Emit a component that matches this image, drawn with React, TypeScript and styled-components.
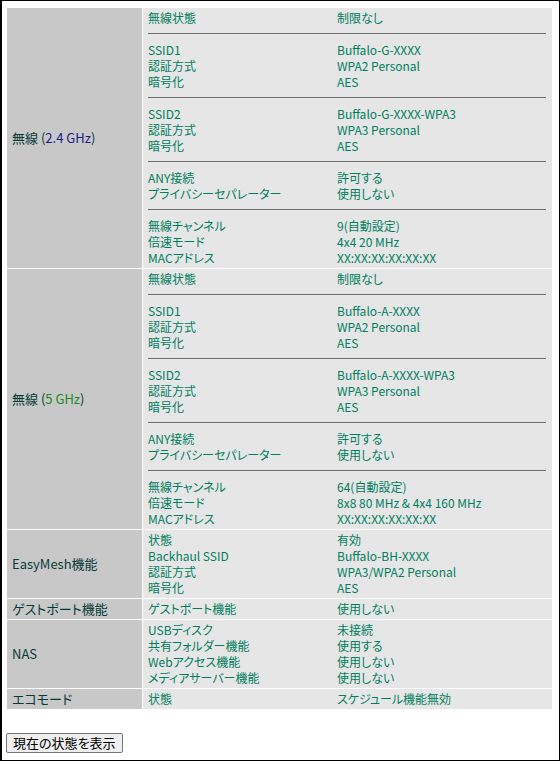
import React from "react";
import styled, { createGlobalStyle } from "styled-components";

const Global = createGlobalStyle`
  html, body { margin: 0; padding: 0; background: #fff; }
  body {
    font-family: "Noto Sans CJK JP", "Noto Sans", sans-serif;
    font-size: 12px;
  }
`;

const Frame = styled.div`
  width: 560px;
  height: 761px;
  box-sizing: border-box;
  border: 1px solid #000;
  border-left-width: 2px;
  padding: 7px 7px 0 5px;
  font-feature-settings: "palt";
`;

const StatusTable = styled.div`
  width: 545px;
  display: grid;
  grid-template-columns: 135px 1fr;
  gap: 1px;
  background: #fff;
`;

const HeadCell = styled.div`
  background: #c8c8c8;
  color: #063a36;
  display: flex;
  align-items: center;
  padding-left: 5px;
  font-size: 13px;
  line-height: 16px;
`;

const Band = styled.span<{ $tone: "blue" | "green" }>`
  color: ${(p) => (p.$tone === "blue" ? "#1a1a8c" : "#1a8a1a")};
`;

const DataCell = styled.div`
  background: #e6e6e6;
  padding: 2px 6px 2px 5px;
`;

const Group = styled.div`
  display: grid;
  grid-template-columns: 189px 1fr;
  line-height: 16px;
  color: #00805e;
`;

const Label = styled.div`
  white-space: nowrap;
`;

const Value = styled.div`
  white-space: nowrap;
`;

const Rule = styled.div`
  margin: 7px 0;
  height: 0;
  border-top: 1px solid #6c6c6c;
  border-bottom: 1px solid #e9e9e9;
`;

const ShowButton = styled.button`
  margin: 24px 0 0 -1px;
  height: 20px;
  padding: 0 6px;
  font-family: "Noto Sans CJK JP", sans-serif;
  font-size: 13px;
  line-height: 16px;
  color: #000;
  background: #efefef;
  border: 1px solid #767676;
  border-radius: 2px;
  font-feature-settings: "palt";
`;

type Pair = [string, string];
type Section = { head: React.ReactNode; groups: Pair[][] };

const wireless = (g: string): Pair[][] => [
  [["無線状態", "制限なし"]],
  [
    ["SSID1", `Buffalo-${g}-XXXX`],
    ["認証方式", "WPA2 Personal"],
    ["暗号化", "AES"],
  ],
  [
    ["SSID2", `Buffalo-${g}-XXXX-WPA3`],
    ["認証方式", "WPA3 Personal"],
    ["暗号化", "AES"],
  ],
  [
    ["ANY接続", "許可する"],
    ["プライバシーセパレーター", "使用しない"],
  ],
];

const sections: Section[] = [
  {
    head: (
      <span>
        無線 (<Band $tone="blue">2.4 GHz</Band>)
      </span>
    ),
    groups: [
      ...wireless("G"),
      [
        ["無線チャンネル", "9(自動設定)"],
        ["倍速モード", "4x4 20 MHz"],
        ["MACアドレス", "XX:XX:XX:XX:XX:XX"],
      ],
    ],
  },
  {
    head: (
      <span>
        無線 (<Band $tone="green">5 GHz</Band>)
      </span>
    ),
    groups: [
      ...wireless("A"),
      [
        ["無線チャンネル", "64(自動設定)"],
        ["倍速モード", "8x8 80 MHz & 4x4 160 MHz"],
        ["MACアドレス", "XX:XX:XX:XX:XX:XX"],
      ],
    ],
  },
  {
    head: "EasyMesh機能",
    groups: [
      [
        ["状態", "有効"],
        ["Backhaul SSID", "Buffalo-BH-XXXX"],
        ["認証方式", "WPA3/WPA2 Personal"],
        ["暗号化", "AES"],
      ],
    ],
  },
  {
    head: "ゲストポート機能",
    groups: [[["ゲストポート機能", "使用しない"]]],
  },
  {
    head: "NAS",
    groups: [
      [
        ["USBディスク", "未接続"],
        ["共有フォルダー機能", "使用する"],
        ["Webアクセス機能", "使用しない"],
        ["メディアサーバー機能", "使用しない"],
      ],
    ],
  },
  {
    head: "エコモード",
    groups: [[["状態", "スケジュール機能無効"]]],
  },
];

export default function App() {
  return (
    <>
      <Global />
      <Frame>
        <StatusTable>
          {sections.map((s, i) => (
            <React.Fragment key={i}>
              <HeadCell>{s.head}</HeadCell>
              <DataCell>
                {s.groups.map((g, j) => (
                  <React.Fragment key={j}>
                    {j > 0 && <Rule />}
                    <Group>
                      {g.map(([l, v], k) => (
                        <React.Fragment key={k}>
                          <Label>{l}</Label>
                          <Value>{v}</Value>
                        </React.Fragment>
                      ))}
                    </Group>
                  </React.Fragment>
                ))}
              </DataCell>
            </React.Fragment>
          ))}
        </StatusTable>
        <ShowButton>現在の状態を表示</ShowButton>
      </Frame>
    </>
  );
}
